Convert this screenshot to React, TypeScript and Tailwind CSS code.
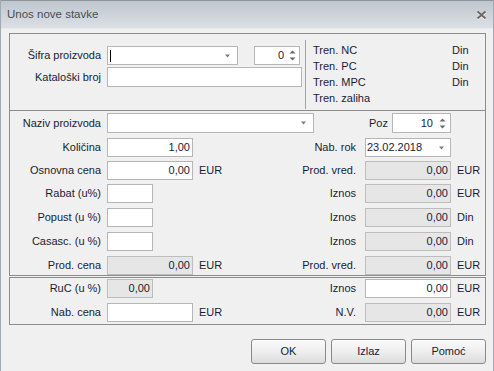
const TXT = "text-[#191c36]";

function DownArrow() {
  return (
    <svg width="7" height="4" viewBox="0 0 7 4">
      <path d="M1 0.5h5L3.5 3.5z" fill="#7d7d7d" />
    </svg>
  );
}

function SpinArrows() {
  return (
    <svg width="7" height="11" viewBox="0 0 7 11">
      <path d="M3.5 0.5L6.5 3.5H0.5z" fill="#6b6b6b" />
      <path d="M0.5 7.5H6.5L3.5 10.5z" fill="#6b6b6b" />
    </svg>
  );
}

function Box({ w, ro, value, h = "h-[19px]" }: { w: string; ro?: boolean; value?: string; h?: string }) {
  return (
    <div
      className={`${w} ${h} border ${ro ? "bg-[#e6e6e6] border-[#bdbdbd]" : "bg-white border-[#b6b6b6]"} flex items-center justify-end pr-[2px]`}
    >
      {value}
    </div>
  );
}

function Unit({ children }: { children: string }) {
  return <span className="ml-[6px]">{children}</span>;
}

function Row({
  mt,
  label,
  left,
  rlabel,
  right,
}: {
  mt: string;
  label: string;
  left: React.ReactNode;
  rlabel: string;
  right: React.ReactNode;
}) {
  return (
    <div className={`flex items-center h-[19px] ${mt}`}>
      <div className="w-[250px] shrink-0 flex items-center">
        <span className="w-[91px] text-right whitespace-nowrap">{label}</span>
        <div className="ml-[6px] flex items-center">{left}</div>
      </div>
      <span className="w-[96px] text-right whitespace-nowrap">{rlabel}</span>
      <div className="ml-[9px] flex items-center">{right}</div>
    </div>
  );
}

export default function App() {
  return (
    <div className={`w-[494px] h-[371px] overflow-hidden bg-[#f0f0f0] border-x border-[#a3a9b0] font-['Liberation_Sans',Arial,sans-serif] text-[11px] ${TXT}`}>
      {/* title bar */}
      <div className="h-[29px] flex items-center justify-between border-t border-b border-t-[#8e959d] border-b-[#e9ecef] bg-gradient-to-b from-[#bfc6ce] to-[#dce0e5] pl-[6px] pr-[5px]">
        <span className="text-[#4a4d52] text-[11.5px]">Unos nove stavke</span>
        <svg width="11" height="10" viewBox="0 0 11 10" className="mr-[1px]">
          <path d="M1.5 1.5L9.5 8.5M9.5 1.5L1.5 8.5" stroke="#f4f4f4" strokeWidth="2" transform="translate(0 1)" />
          <path d="M1.5 1.5L9.5 8.5M9.5 1.5L1.5 8.5" stroke="#6f6661" strokeWidth="1.8" />
        </svg>
      </div>

      <div className="ml-[8px] w-[477px]">
        {/* group 1 */}
        <div className="mt-[4px] h-[78px] border border-[#8c8c8c] flex">
          <div className="w-[295px] shrink-0 pt-[12px]">
            <div className="flex items-center h-[19px]">
              <span className="w-[91px] text-right whitespace-nowrap">Šifra proizvoda</span>
              <div className="ml-[6px] w-[131px] h-[19px] bg-white border border-[#b6b6b6] flex items-center justify-between pl-[2px] pr-[6px]">
                <div className="w-px h-[12px] bg-black" />
                <DownArrow />
              </div>
              <div className="ml-[16px] w-[46px] h-[19px] bg-white border border-[#b6b6b6] flex items-center justify-end pr-[3px] gap-[5px]">
                <span>0</span>
                <SpinArrows />
              </div>
            </div>
            <div className="flex items-center h-[20px] mt-[2px]">
              <span className="w-[91px] text-right whitespace-nowrap">Kataloški broj</span>
              <div className="ml-[6px] w-[195px] h-[20px] bg-white border border-[#b6b6b6]" />
            </div>
          </div>
          <div className="w-px bg-[#a3a3a3] mt-[6px] mb-[1px]" />
          <div className="pl-[7px] pt-[8px]">
            {[
              ["Tren. NC", "Din"],
              ["Tren. PC", "Din"],
              ["Tren. MPC", "Din"],
              ["Tren. zaliha", ""],
            ].map(([a, b]) => (
              <div key={a} className="flex h-[16px] items-center">
                <span className="w-[139px] whitespace-nowrap">{a}</span>
                <span>{b}</span>
              </div>
            ))}
          </div>
        </div>

        {/* group 2 */}
        <div className="h-[165px] border border-t-0 border-[#8c8c8c] pt-[2px]">
          <div className="flex items-center h-[20px]">
            <span className="w-[91px] text-right whitespace-nowrap">Naziv proizvoda</span>
            <div className="ml-[6px] w-[207px] h-[20px] bg-white border border-[#b6b6b6] flex items-center justify-end pr-[6px]">
              <DownArrow />
            </div>
            <span className="w-[74px] text-right">Poz</span>
            <div className="ml-[4px] w-[59px] h-[20px] bg-white border border-[#b6b6b6] flex items-center justify-end pr-[4px] gap-[6px]">
              <span>10</span>
              <SpinArrows />
            </div>
          </div>
          <Row
            mt="mt-[5px]"
            label="Količina"
            left={<Box w="w-[86px]" value="1,00" />}
            rlabel="Nab. rok"
            right={
              <div className="w-[86px] h-[19px] bg-white border border-[#b6b6b6] flex items-center justify-between pl-[1px] pr-[5px]">
                <span>23.02.2018</span>
                <DownArrow />
              </div>
            }
          />
          <Row
            mt="mt-[4px]"
            label="Osnovna cena"
            left={<><Box w="w-[86px]" value="0,00" /><Unit>EUR</Unit></>}
            rlabel="Prod. vred."
            right={<><Box w="w-[86px]" ro value="0,00" /><Unit>EUR</Unit></>}
          />
          <Row
            mt="mt-[4px]"
            label="Rabat (u%)"
            left={<Box w="w-[46px]" />}
            rlabel="Iznos"
            right={<><Box w="w-[86px]" ro value="0,00" /><Unit>EUR</Unit></>}
          />
          <Row
            mt="mt-[5px]"
            label="Popust (u %)"
            left={<Box w="w-[46px]" />}
            rlabel="Iznos"
            right={<><Box w="w-[86px]" ro value="0,00" /><Unit>Din</Unit></>}
          />
          <Row
            mt="mt-[5px]"
            label="Casasc. (u %)"
            left={<Box w="w-[46px]" />}
            rlabel="Iznos"
            right={<><Box w="w-[86px]" ro value="0,00" /><Unit>Din</Unit></>}
          />
          <Row
            mt="mt-[5px]"
            label="Prod. cena"
            left={<><Box w="w-[86px]" ro value="0,00" /><Unit>EUR</Unit></>}
            rlabel="Prod. vred."
            right={<><Box w="w-[86px]" ro value="0,00" /><Unit>EUR</Unit></>}
          />
        </div>

        {/* group 3 */}
        <div className="mt-[1px] h-[48px] border border-[#8c8c8c] pt-[1px]">
          <Row
            mt="mt-0"
            label="RuC (u %)"
            left={<Box w="w-[46px]" ro value="0,00" />}
            rlabel="Iznos"
            right={<><Box w="w-[86px]" value="0,00" /><Unit>EUR</Unit></>}
          />
          <Row
            mt="mt-[5px]"
            label="Nab. cena"
            left={<><Box w="w-[86px]" /><Unit>EUR</Unit></>}
            rlabel="N.V."
            right={<><Box w="w-[86px]" ro value="0,00" /><Unit>EUR</Unit></>}
          />
        </div>

        {/* buttons */}
        <div className="mt-[14px] flex justify-end gap-[5px]">
          {["OK", "Izlaz", "Pomoć"].map((b) => (
            <button
              key={b}
              className="w-[75px] h-[25px] rounded-[3px] border border-[#8a8a8a] bg-gradient-to-b from-[#fbfbfb] via-[#eeeeee] to-[#dcdcdc] flex items-center justify-center"
            >
              {b}
            </button>
          ))}
        </div>
      </div>
    </div>
  );
}
